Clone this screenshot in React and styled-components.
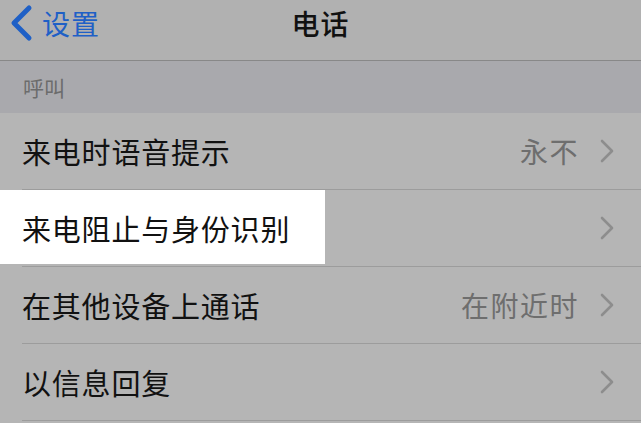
import React from "react";
import styled, { createGlobalStyle } from "styled-components";

const GlobalStyle = createGlobalStyle`
  html, body {
    margin: 0;
    padding: 0;
    background: #b5b5b5;
  }
  body {
    font-family: "Noto Sans CJK SC", "Noto Sans", sans-serif;
    -webkit-font-smoothing: antialiased;
  }
`;

const Screen = styled.div`
  width: 641px;
  height: 423px;
  overflow: hidden;
  background: #b5b5b5;
`;

const NavBar = styled.header`
  position: relative;
  height: 60px;
  display: flex;
  align-items: center;
  justify-content: center;
  background: #b1b1b1;
  border-bottom: 1px solid #888888;
`;

const BackButton = styled.button`
  position: absolute;
  left: 9px;
  top: 0;
  height: 46px;
  display: flex;
  align-items: center;
  gap: 9px;
  padding: 0;
  border: 0;
  background: none;
  color: #1f60c6;
  font-family: inherit;
  font-size: 28px;
  letter-spacing: 1px;
  line-height: 1;
  cursor: pointer;
`;

const Title = styled.h1`
  margin: 0 0 14px;
  font-size: 28px;
  font-weight: 500;
  color: #111111;
  letter-spacing: 1px;
`;

const SectionHeader = styled.div`
  height: 52px;
  box-sizing: border-box;
  padding: 0 0 0 23px;
  display: flex;
  align-items: center;
  background: #a9a9ad;
  color: #6c6c6c;
  font-size: 21px;
`;

const List = styled.ul`
  margin: 0;
  padding: 0;
  list-style: none;
`;

const Row = styled.li`
  height: 77px;
  display: flex;
  align-items: center;
  background: ${p =>
    p.$highlighted
      ? "linear-gradient(to bottom, #ffffff 74px, #b5b5b5 74px)"
      : "#b5b5b5"};
  background-size: ${p => (p.$highlighted ? "325px 100%" : "auto")};
  background-repeat: no-repeat;
  background-color: #b5b5b5;
`;

const RowInner = styled.div`
  flex: 1;
  height: 100%;
  margin-left: 22px;
  padding-right: 27px;
  display: flex;
  align-items: center;
  border-bottom: 1px solid #9c9c9c;
  box-sizing: border-box;
`;

const Label = styled.span`
  flex: 1;
  font-size: 29px;
  color: #111111;
  letter-spacing: 0.8px;
`;

const Value = styled.span`
  font-size: 28px;
  color: #6e6e6e;
  letter-spacing: 1.5px;
  margin-right: 21px;
`;

const Chevron = styled.svg`
  width: 14px;
  height: 24px;
  flex-shrink: 0;
`;

const BackIcon = () => (
  <svg width="24" height="38" viewBox="0 0 24 38">
    <path
      d="M20 4 L5 19 L20 34"
      fill="none"
      stroke="#1f60c6"
      strokeWidth="5"
      strokeLinecap="round"
      strokeLinejoin="round"
    />
  </svg>
);

const rows = [
  { label: "来电时语音提示", value: "永不" },
  { label: "来电阻止与身份识别", highlighted: true },
  { label: "在其他设备上通话", value: "在附近时" },
  { label: "以信息回复" },
];

export default function App() {
  return (
    <Screen>
      <GlobalStyle />
      <NavBar>
        <BackButton>
          <BackIcon />
          设置
        </BackButton>
        <Title>电话</Title>
      </NavBar>
      <SectionHeader>呼叫</SectionHeader>
      <List>
        {rows.map(r => (
          <Row key={r.label} $highlighted={r.highlighted}>
            <RowInner>
              <Label>{r.label}</Label>
              {r.value && <Value>{r.value}</Value>}
              <Chevron viewBox="0 0 14 24">
                <path
                  d="M2 2 L12 12 L2 22"
                  fill="none"
                  stroke="#8d8d8d"
                  strokeWidth="2.6"
                  strokeLinecap="round"
                  strokeLinejoin="round"
                />
              </Chevron>
            </RowInner>
          </Row>
        ))}
      </List>
    </Screen>
  );
}
